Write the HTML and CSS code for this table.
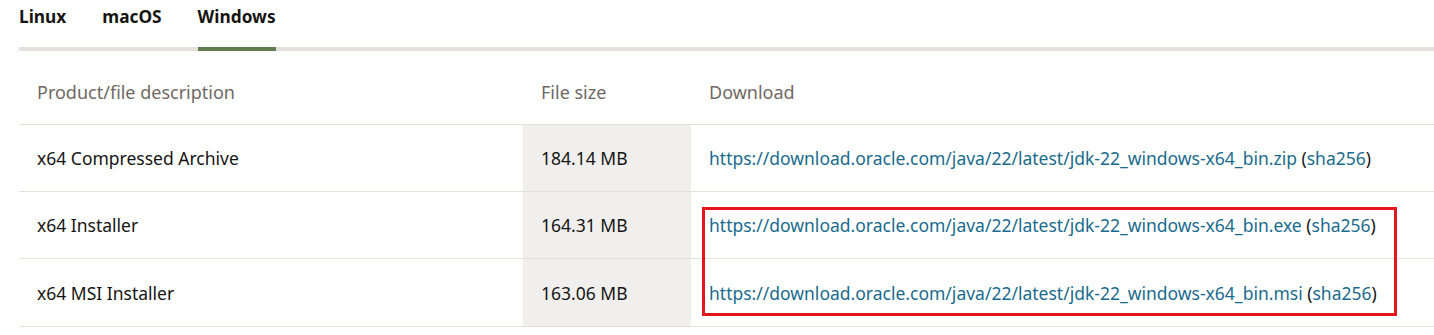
FILE: index.html
```html
<!DOCTYPE html>
<html lang="en">
<head>
    <meta charset="UTF-8">
    <meta name="viewport" content="width=device-width, initial-scale=1.0">
    <title>JDK 22 Downloads</title>
    <link rel="stylesheet" href="styles.css">
</head>
<body>

<div class="tabs">
    <a class="tab">Linux</a>
    <a class="tab">macOS</a>
    <a class="tab active">Windows</a>
</div>

<div class="panel">
<table class="downloads">
    <thead>
        <tr>
            <th class="desc">Product/file description</th>
            <th class="size">File size</th>
            <th>Download</th>
        </tr>
    </thead>
    <tbody>
        <tr>
            <td>x64 Compressed Archive</td>
            <td class="size">184.14 MB</td>
            <td><a href="#">https://download.oracle.com/java/22/latest/jdk-22_windows-x64_bin.zip</a> (<a href="#">sha256</a>)</td>
        </tr>
        <tr>
            <td>x64 Installer</td>
            <td class="size">164.31 MB</td>
            <td><a href="#">https://download.oracle.com/java/22/latest/jdk-22_windows-x64_bin.exe</a> (<a href="#">sha256</a>)</td>
        </tr>
        <tr>
            <td>x64 MSI Installer</td>
            <td class="size">163.06 MB</td>
            <td><a href="#">https://download.oracle.com/java/22/latest/jdk-22_windows-x64_bin.msi</a> (<a href="#">sha256</a>)</td>
        </tr>
    </tbody>
</table>
<div class="highlight"></div>
</div>

</body>
</html>
```

FILE: styles.css
```css
body {
    margin: 0;
    font-family: "Noto Sans", sans-serif;
    color: #161513;
    background-color: #fff;
}

.tabs {
    display: flex;
    gap: 36px;
    margin-left: 19px;
    border-bottom: 4px solid #e4e1dc;
    height: 47px;
}

.tab {
    font-size: 17.3px;
    font-weight: 700;
    line-height: 34px;
    margin-bottom: -4px;
    border-bottom: 4px solid transparent;
    color: #161513;
}

.tab.active {
    border-bottom-color: #5f7d4f;
}

.panel {
    position: relative;
    margin-left: 19px;
}

.downloads {
    width: 100%;
    border-collapse: collapse;
    font-size: 17.5px;
}

.downloads th {
    text-align: left;
    font-weight: 400;
    font-size: 18px;
    color: #6f6964;
    height: 65px;
    padding: 8px 18px 0;
    border-bottom: 1px solid #e4e1dc;
}

.downloads th.desc {
    width: 468px;
}

.downloads th.size {
    width: 132px;
}

.downloads td {
    height: 66px;
    padding: 0 18px;
    border-bottom: 1px solid #e4e1dc;
}

.downloads tr:last-child td {
    height: 67px;
}

.downloads td.size {
    background-color: #f1efed;
}

.downloads a {
    color: #1a6b8d;
    text-decoration: none;
}

.highlight {
    position: absolute;
    left: 683px;
    top: 156px;
    width: 689px;
    height: 103px;
    border: 3px solid #e3161e;
}
```
